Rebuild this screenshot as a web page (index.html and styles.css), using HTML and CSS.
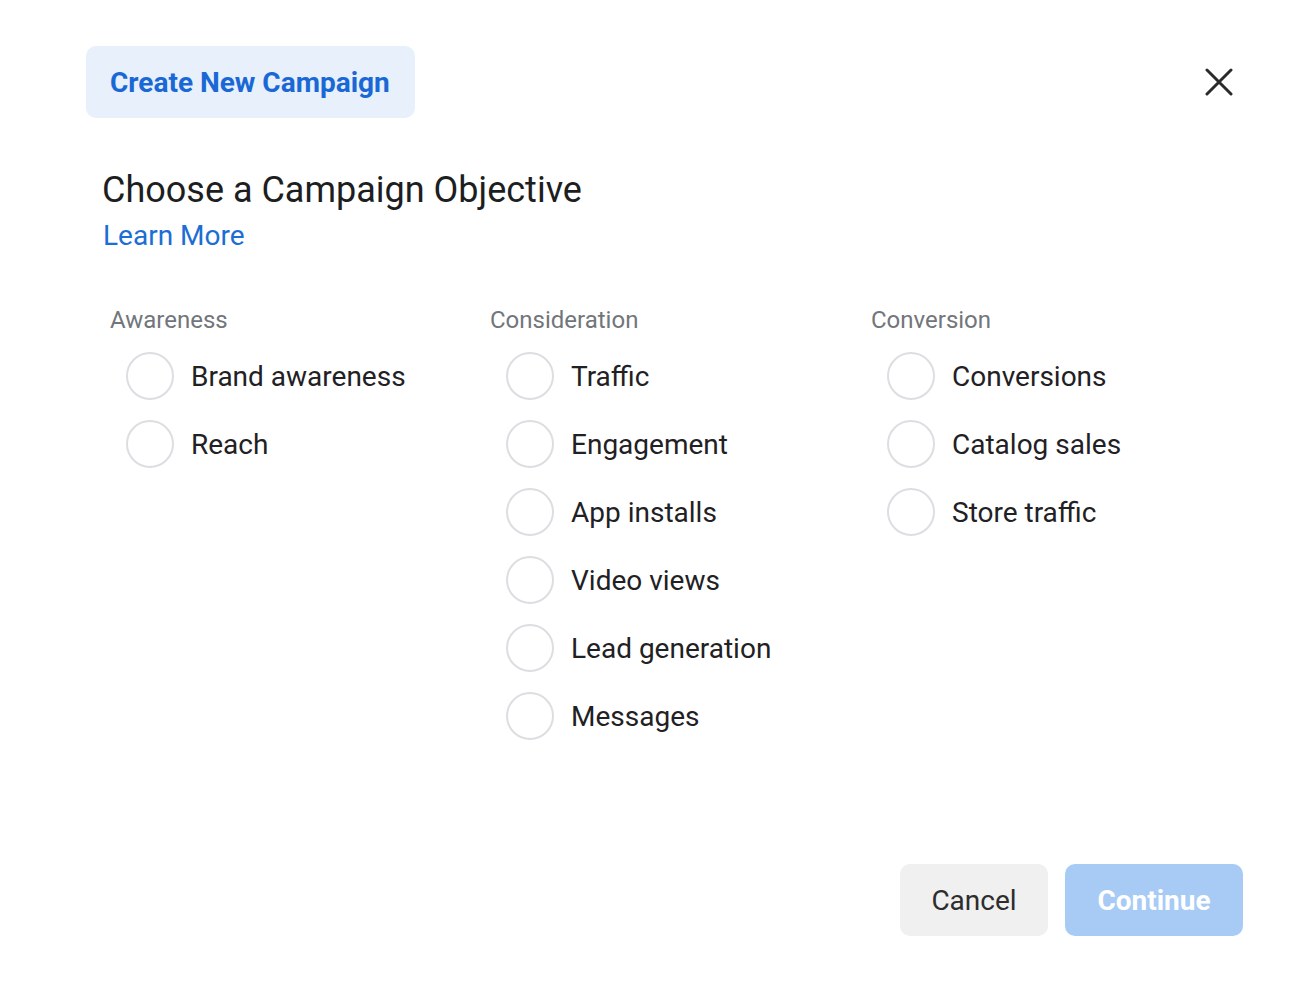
FILE: index.html
```html
<!DOCTYPE html>
<html lang="en">
<head>
<meta charset="utf-8">
<title>Create New Campaign</title>
<link rel="stylesheet" href="styles.css">
</head>
<body>
<div class="dialog">
  <div class="top">
    <div class="tab">Create New Campaign</div>
    <button class="close" aria-label="Close">
      <svg width="28" height="28" viewBox="0 0 28 28"><path d="M2 2 L26 26 M26 2 L2 26" stroke="#2b2b2b" stroke-width="3" stroke-linecap="round" fill="none"/></svg>
    </button>
  </div>

  <div class="intro">
    <h1 class="title">Choose a Campaign Objective</h1>
    <a class="learn" href="#">Learn More</a>
  </div>

  <div class="columns">
    <div class="col">
      <div class="col-head">Awareness</div>
      <label class="opt"><span class="radio"></span><span class="lbl">Brand awareness</span></label>
      <label class="opt"><span class="radio"></span><span class="lbl">Reach</span></label>
    </div>
    <div class="col">
      <div class="col-head">Consideration</div>
      <label class="opt"><span class="radio"></span><span class="lbl">Traffic</span></label>
      <label class="opt"><span class="radio"></span><span class="lbl">Engagement</span></label>
      <label class="opt"><span class="radio"></span><span class="lbl">App installs</span></label>
      <label class="opt"><span class="radio"></span><span class="lbl">Video views</span></label>
      <label class="opt"><span class="radio"></span><span class="lbl">Lead generation</span></label>
      <label class="opt"><span class="radio"></span><span class="lbl">Messages</span></label>
    </div>
    <div class="col">
      <div class="col-head">Conversion</div>
      <label class="opt"><span class="radio"></span><span class="lbl">Conversions</span></label>
      <label class="opt"><span class="radio"></span><span class="lbl">Catalog sales</span></label>
      <label class="opt"><span class="radio"></span><span class="lbl">Store traffic</span></label>
    </div>
  </div>

  <div class="footer">
    <button class="btn cancel">Cancel</button>
    <button class="btn continue">Continue</button>
  </div>
</div>
</body>
</html>
```

FILE: styles.css
```css
html, body {
  margin: 0;
  padding: 0;
  background: #ffffff;
}

body {
  font-family: Roboto, "Liberation Sans", sans-serif;
  color: #1c1e21;
}

.dialog {
  padding: 46px 71px 0 86px;
}

.top {
  display: flex;
  justify-content: space-between;
  align-items: center;
}

.tab {
  width: 329px;
  height: 72px;
  box-sizing: border-box;
  padding-left: 24px;
  display: flex;
  align-items: center;
  background: #e7f0fb;
  border-radius: 10px;
  color: #1a68d6;
  font-weight: 700;
  font-size: 28px;
}

.close {
  width: 48px;
  height: 48px;
  border: none;
  background: transparent;
  padding: 0;
  display: flex;
  align-items: center;
  justify-content: center;
  cursor: pointer;
}

.intro {
  padding-left: 16px;
  margin-top: 50px;
  display: flex;
  flex-direction: column;
  align-items: flex-start;
}

.title {
  margin: 0;
  font-weight: 400;
  font-size: 36px;
  line-height: 44px;
  color: #1c1e21;
}

.learn {
  margin-top: 7px;
  padding-left: 1px;
  font-size: 28px;
  line-height: 34px;
  color: #1b6ed3;
  text-decoration: none;
}

.columns {
  margin-top: 53px;
  padding-left: 24px;
  display: grid;
  grid-template-columns: 380px 381px 1fr;
}

.col {
  display: flex;
  flex-direction: column;
  gap: 20px;
}

.col-head {
  font-size: 24px;
  line-height: 28px;
  color: #72767b;
  margin-bottom: -2px;
}

.opt {
  display: flex;
  align-items: center;
  padding-left: 16px;
  gap: 17px;
  height: 48px;
}

.radio {
  width: 48px;
  height: 48px;
  box-sizing: border-box;
  border: 2px solid #dcdee1;
  border-radius: 50%;
  flex: none;
}

.lbl {
  font-size: 28px;
  color: #1f2124;
}

.footer {
  margin-top: 124px;
  display: flex;
  justify-content: flex-end;
  gap: 17px;
}

.btn {
  height: 72px;
  border: none;
  border-radius: 10px;
  font-family: Roboto, "Liberation Sans", sans-serif;
  font-size: 28px;
  padding: 0;
  cursor: pointer;
}

.cancel {
  width: 148px;
  background: #f0f0f0;
  color: #2d2d2d;
}

.continue {
  width: 178px;
  background: #a7cbf5;
  color: #ffffff;
  font-weight: 700;
}
```
